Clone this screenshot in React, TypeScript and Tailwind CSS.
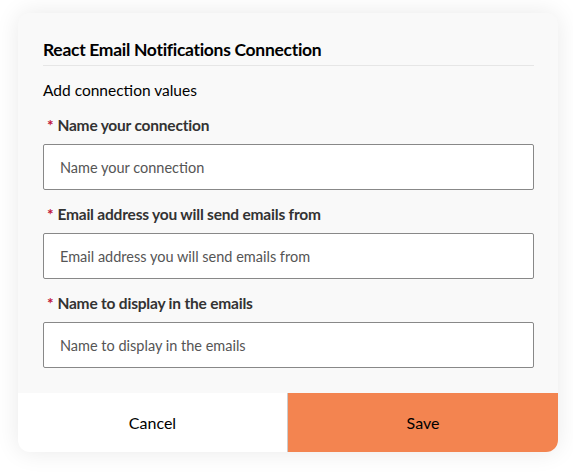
import React from "react";

const font = { fontFamily: "Lato, 'Noto Sans', sans-serif" };

function Field({ label }: { label: string }) {
  return (
    <div className="flex flex-col">
      <div className="flex items-center h-[24px] pl-[4px] text-[15.5px] font-bold text-[#333] tracking-[-0.2px]">
        <span className="text-[#c0143c] mr-[4px]">*</span>
        {label}
      </div>
      <input
        placeholder={label}
        className="mt-[6px] h-[46px] w-full border border-[#888] rounded-[2px] bg-white px-[16px] text-[14.5px] text-[#555] placeholder:text-[#555] outline-none"
        style={font}
      />
    </div>
  );
}

export default function App() {
  return (
    <div className="w-[573px] h-[472px] bg-white pt-[13px] pl-[18px]" style={font}>
      <div className="w-[540px] h-[439px] bg-[#f9f9f9] rounded-[12px] shadow-[0_0_24px_rgba(0,0,0,0.09)] flex flex-col overflow-hidden">
        <div className="flex-1 pl-[25px] pr-[24px] pt-[26px]">
          <div className="text-[17.5px] font-bold text-black tracking-[-0.3px] leading-[22px]">
            React Email Notifications Connection
          </div>
          <div className="mt-[4px] h-px bg-[#e6e6e6]" />
          <div className="mt-[14px] text-[15.5px] text-black leading-[20px]">Add connection values</div>
          <div className="mt-[14px] flex flex-col gap-[13px]">
            <Field label="Name your connection" />
            <Field label="Email address you will send emails from" />
            <Field label="Name to display in the emails" />
          </div>
        </div>
        <div className="h-[59px] flex">
          <button className="w-[270px] bg-white border-r border-[#ccc] text-[16px] text-black" style={font}>
            Cancel
          </button>
          <button className="flex-1 bg-[#f38450] text-[16px] text-black" style={font}>
            Save
          </button>
        </div>
      </div>
    </div>
  );
}
